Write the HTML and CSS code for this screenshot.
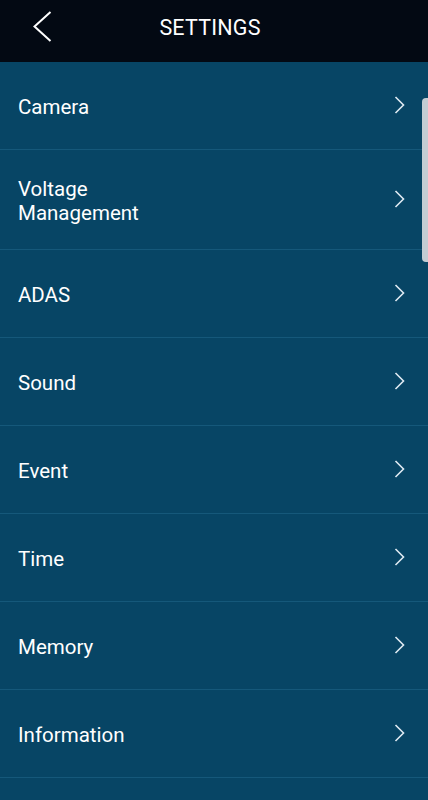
FILE: index.html
```html
<!DOCTYPE html>
<html lang="en">
<head>
    <meta charset="UTF-8">
    <meta name="viewport" content="width=device-width, initial-scale=1.0">
    <title>Settings</title>
    <link rel="stylesheet" href="styles.css">
</head>
<body>
    <div class="topbar">
        <button class="back" aria-label="Back">
            <svg width="20" height="32" viewBox="0 0 20 32"><path d="M18.5 1 L2.5 15.5 L18.5 30" fill="none" stroke="#fff" stroke-width="2"/></svg>
        </button>
        <h1 class="title">SETTINGS</h1>
    </div>

    <ul class="menu">
        <li class="item"><span>Camera</span><svg class="chev" width="11" height="18" viewBox="0 0 11 18"><path d="M1.5 1 L9.5 9 L1.5 17" fill="none" stroke="#dfeaf2" stroke-width="1.6"/></svg></li>
        <li class="item tall"><span>Voltage<br>Management</span><svg class="chev" width="11" height="18" viewBox="0 0 11 18"><path d="M1.5 1 L9.5 9 L1.5 17" fill="none" stroke="#dfeaf2" stroke-width="1.6"/></svg></li>
        <li class="item"><span>ADAS</span><svg class="chev" width="11" height="18" viewBox="0 0 11 18"><path d="M1.5 1 L9.5 9 L1.5 17" fill="none" stroke="#dfeaf2" stroke-width="1.6"/></svg></li>
        <li class="item"><span>Sound</span><svg class="chev" width="11" height="18" viewBox="0 0 11 18"><path d="M1.5 1 L9.5 9 L1.5 17" fill="none" stroke="#dfeaf2" stroke-width="1.6"/></svg></li>
        <li class="item"><span>Event</span><svg class="chev" width="11" height="18" viewBox="0 0 11 18"><path d="M1.5 1 L9.5 9 L1.5 17" fill="none" stroke="#dfeaf2" stroke-width="1.6"/></svg></li>
        <li class="item"><span>Time</span><svg class="chev" width="11" height="18" viewBox="0 0 11 18"><path d="M1.5 1 L9.5 9 L1.5 17" fill="none" stroke="#dfeaf2" stroke-width="1.6"/></svg></li>
        <li class="item"><span>Memory</span><svg class="chev" width="11" height="18" viewBox="0 0 11 18"><path d="M1.5 1 L9.5 9 L1.5 17" fill="none" stroke="#dfeaf2" stroke-width="1.6"/></svg></li>
        <li class="item"><span>Information</span><svg class="chev" width="11" height="18" viewBox="0 0 11 18"><path d="M1.5 1 L9.5 9 L1.5 17" fill="none" stroke="#dfeaf2" stroke-width="1.6"/></svg></li>
    </ul>

    <div class="scrollbar"></div>
</body>
</html>
```

FILE: styles.css
```css
body {
    margin: 0;
    background-color: #074565;
    font-family: Roboto, "Liberation Sans", sans-serif;
    color: #fff;
    height: 800px;
    overflow: hidden;
}
.topbar {
    height: 62px;
    background-color: #030913;
    display: flex;
    align-items: center;
    justify-content: center;
    position: relative;
}
.back {
    position: absolute;
    left: 32px;
    top: 11px;
    background: none;
    border: 0;
    padding: 0;
    line-height: 0;
}
.title {
    margin: -7px 8px 0 0;
    font-size: 21.5px;
    font-weight: 400;
    letter-spacing: 0.2px;
}
.menu {
    list-style: none;
    margin: 0;
    padding: 0;
}
.item {
    border-bottom: 1px solid #15587a;
    display: flex;
    align-items: center;
    justify-content: space-between;
    padding: 2px 23px 0 18px;
    box-sizing: border-box;
    height: 88px;
    font-size: 20.5px;
    line-height: 24px;
}
.item.tall {
    height: 100px;
}
.chev {
    margin-top: -4px;
}
.scrollbar {
    position: absolute;
    right: 0;
    top: 98px;
    width: 6px;
    height: 164px;
    background-color: #c3ccd3;
    border-radius: 4px 0 0 4px;
}
```
